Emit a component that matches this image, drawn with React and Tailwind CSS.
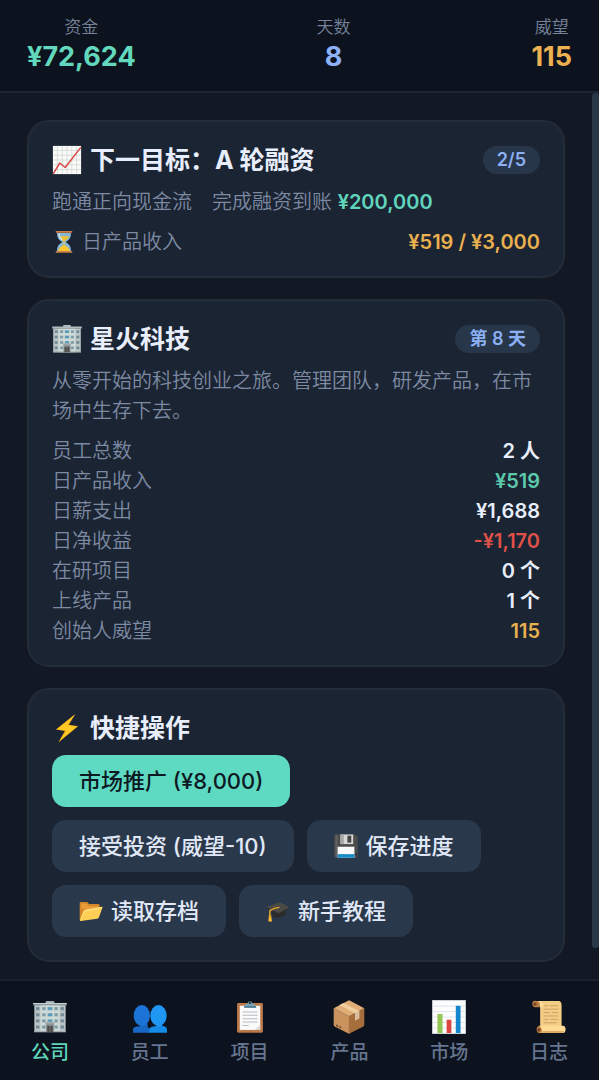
import React from "react";

const windowRows = [24, 42, 60, 78];
const windowCols = [14, 32, 50, 68, 86];

function Building({ className }) {
  return (
    <svg className={className} viewBox="0 0 100 100" aria-hidden="true">
      <path d="M37 4h26v10H37z" fill="#9aa7ab" />
      <path d="M39 4h22v3H39z" fill="#c7d1d3" />
      <path d="M4 14h92v80H4z" fill="#b9c5c6" />
      <path d="M1 9h98v7H1z" fill="#8c9a9e" />
      <path d="M1 9h98v3H1z" fill="#cbd4d5" />
      <path d="M22 16h56v78H22z" fill="#cfd9d6" />
      {windowRows.map((y) =>
        windowCols.map((x) => (
          <rect
            key={`${x}-${y}`}
            x={x === 50 ? 43 : x - 5}
            y={y - 3}
            width={x === 50 ? 14 : 10}
            height="9"
            fill={x === 50 ? "#5a9bbd" : x === 14 || x === 86 ? "#748b95" : "#7d9ea8"}
          />
        ))
      )}
      <path d="M3 91h94v4H3z" fill="#a3afb1" />
      <path d="M38 66h24v28H38z" fill="#8d9596" />
      <path d="M36 64h28v5H36z" fill="#a9b1b2" />
      <path d="M42 76h7v18h-7zM51 76h7v18h-7z" fill="#4d4745" />
    </svg>
  );
}

function ChartUp({ className }) {
  return (
    <svg className={className} viewBox="0 0 100 100" aria-hidden="true">
      <path d="M3 3h94v94H3z" fill="#fbfbf8" />
      <path
        d="M3 18h94M3 34h94M3 50h94M3 66h94M3 82h94M18 3v94M34 3v94M50 3v94M66 3v94M82 3v94"
        stroke="#ccd6d1"
        strokeWidth="2.5"
      />
      <path d="M4 96 26 60l18 15L96 8" fill="none" stroke="#d9474a" strokeWidth="5" strokeLinejoin="round" />
    </svg>
  );
}

function Hourglass({ className }) {
  return (
    <svg className={className} viewBox="0 0 100 100" aria-hidden="true">
      <path d="M21 12h58c0 22-8 29-22 38 14 9 22 17 22 38H21c0-21 8-29 22-38C29 41 21 34 21 12z" fill="#86b8d6" />
      <path d="M29 26h42c-3 10-11 15-21 22-10-7-18-12-21-22z" fill="#f3c02f" />
      <path d="M48 46h4v20h-4z" fill="#f7cf45" />
      <path d="M26 88c2-13 12-19 24-25 12 6 22 12 24 25z" fill="#fbc72b" />
      <path d="M29 15c1 14 6 21 14 27" fill="none" stroke="#cfe6f2" strokeWidth="5" />
      <path d="M16 4h68v8H16zM16 88h68v8H16z" fill="#a8653e" />
      <path d="M16 4h68v3H16zM16 88h68v3H16z" fill="#cd8c5c" />
    </svg>
  );
}

function Bolt({ className }) {
  return (
    <svg className={className} viewBox="0 0 100 100" aria-hidden="true">
      <path d="M78 3 13 55l30 5-22 38 66-54-31-5z" fill="#fdb61b" />
      <path d="M74 7 20 53l31 4-22 32 51-43-32-5z" fill="#feca28" />
    </svg>
  );
}

function Floppy({ className }) {
  return (
    <svg className={className} viewBox="0 0 100 100" aria-hidden="true">
      <path d="M8 1h79l12 12v78a8 8 0 0 1-8 8H8a7 7 0 0 1-7-7V8a7 7 0 0 1 7-7z" fill="#4c4c4c" />
      <path d="M6 3h8v94H6z" fill="#636363" />
      <path d="M27 2h53v40H27z" fill="#d7d7d7" />
      <path d="M27 2h14v40H27z" fill="#a9a9a9" />
      <path d="M56 7h16v29H56z" fill="#454545" />
      <path d="M15 53h70v46H15z" fill="#fafafa" />
      <path d="M15 84h70v15H15z" fill="#168bc6" />
      <path d="M89 82h6v7h-6z" fill="#222" />
    </svg>
  );
}

function Folder({ className }) {
  return (
    <svg className={className} viewBox="0 0 100 100" aria-hidden="true">
      <path d="M3 17q0-5 5-5h26l8 9h38q6 0 6 6v14L16 88 3 90z" fill="#d4872b" />
      <path d="M9 20h24l8 9h38v14H9z" fill="#e79c38" />
      <path d="M28 45 99 32 83 76q-2 5-7 6L7 92q-4 1-3-4l15-37q3-5 9-6z" fill="#ffcf55" />
      <path d="m25 52 69-13 2-7-68 13q-6 1-9 6L4 88z" fill="#ffe083" />
    </svg>
  );
}

function GradCap({ className }) {
  return (
    <svg className={className} viewBox="0 0 100 100" aria-hidden="true">
      <path d="M27 42v29c8 12 43 8 57-6V38z" fill="#2b2b2b" />
      <path d="M1 33 57 14l42 21-47 28z" fill="#4a4a46" />
      <path d="m1 33 51 25 47-23v5L52 64 1 38z" fill="#303030" />
      <path d="M54 35c-14 1-28 7-38 13v25" fill="none" stroke="#e8a722" strokeWidth="6" strokeLinecap="round" />
      <path d="m12 68 9-1 4 27H10z" fill="#f8b934" />
      <path d="M11 72h11" stroke="#c27d16" strokeWidth="3" />
    </svg>
  );
}

function People({ className }) {
  return (
    <svg className={className} viewBox="0 0 100 100" aria-hidden="true">
      <path d="M0 96V87c0-7 8-9 18-10 7-1 8-3 8-7h17v10l9 5v11z" fill="#1768c4" />
      <ellipse cx="26" cy="46" rx="24" ry="31" fill="#1b74d5" />
      <path d="M48 96V88c0-8 8-10 17-11 6-1 6-4 6-8h14c0 5 0 7 5 8 6 1 10 3 10 10v9z" fill="#168ce9" />
      <ellipse cx="75" cy="46" rx="24" ry="31" fill="#2098f3" />
    </svg>
  );
}

function Clipboard({ className }) {
  return (
    <svg className={className} viewBox="0 0 100 100" aria-hidden="true">
      <rect x="12" y="9" width="76" height="87" rx="4" fill="#bb7a4c" />
      <path d="M20 17h60v71H20z" fill="#fafafa" />
      <path d="M64 88 80 74v14z" fill="#d7d7d7" />
      <path d="M28 35h44M28 45h44M28 55h44M28 65h44M28 75h18" stroke="#b5bcc0" strokeWidth="3" />
      <path d="M33 22c0-8 5-10 10-11a7 7 0 0 1 14 0c5 1 11 3 11 11z" fill="#75a4b8" />
      <path d="M33 18h35v5H33z" fill="#4e7d91" />
      <circle cx="50" cy="8" r="4" fill="#263b47" />
    </svg>
  );
}

function Parcel({ className }) {
  return (
    <svg className={className} viewBox="0 0 100 100" aria-hidden="true">
      <path d="m5 24 45 24v51L9 79q-4-2-4-6z" fill="#ca935d" />
      <path d="M50 48 95 24v49q0 4-4 6L50 99z" fill="#a66e3c" />
      <path d="M5 24 47 2q3-2 6 0l42 22-45 24z" fill="#dfae76" />
      <path d="M22 15 34 9l46 23v22l-12 6V39z" fill="#efcf9f" />
      <path d="m68 39 12-7v22l-12 6z" fill="#d9bf9f" />
      <path d="m50 48v51" stroke="#b77e4a" strokeWidth="2" />
      <path d="m12 71 6 3v6l-6-3zM22 76l5 2v6l-5-2z" fill="#74502e" />
    </svg>
  );
}

function BarChart({ className }) {
  return (
    <svg className={className} viewBox="0 0 100 100" aria-hidden="true">
      <path d="M1 1h98v98H1z" fill="#fdfdfd" />
      <path d="M1 18h98M1 34h98M1 50h98M1 66h98M1 82h98" stroke="#ced9df" strokeWidth="2" />
      <path d="M1 1h98v98H1z" fill="none" stroke="#d5dfe4" strokeWidth="2" />
      <path d="M16 41h15v56H16z" fill="#93c653" />
      <path d="M43 58h14v39H43z" fill="#dd4541" />
      <path d="M70 17h14v80H70z" fill="#1685cf" />
    </svg>
  );
}

function Scroll({ className }) {
  return (
    <svg className={className} viewBox="0 0 100 100" aria-hidden="true">
      <path d="M8 3h70c8 0 9 7 9 14v62H24V20z" fill="#f4cd86" />
      <path d="M8 2C-2 3-1 20 8 21h15V10C22 4 16 2 8 2z" fill="#bb7d43" />
      <circle cx="9" cy="12" r="5" fill="#704523" />
      <path d="M17 3c8 2 8 9 7 18h7c1-11-1-17-14-18z" fill="#ffe0a3" />
      <path d="M21 76h71c9 1 9 20 0 21H21z" fill="#ffdb95" />
      <path d="M21 91h74q-1 5-5 6H21z" fill="#dfad65" />
      <path d="M21 76c-10 1-10 21 0 22 7-2 9-7 7-14z" fill="#bd7b42" />
      <circle cx="20" cy="88" r="5" fill="#704523" />
      <path d="M35 17h13M52 17h25M34 27h43M34 37h20M59 37h18M34 47h43M34 57h15M54 57h23M34 67h38" stroke="#bb8d53" strokeWidth="2" />
    </svg>
  );
}

const stats = [
  { label: "员工总数", value: "2 人", color: "text-[#e8eefc]" },
  { label: "日产品收入", value: "¥519", color: "text-[#5cc9ad]" },
  { label: "日薪支出", value: "¥1,688", color: "text-[#e8eefc]" },
  { label: "日净收益", value: "-¥1,170", color: "text-[#dd5148]" },
  { label: "在研项目", value: "0 个", color: "text-[#e8eefc]" },
  { label: "上线产品", value: "1 个", color: "text-[#e8eefc]" },
  { label: "创始人威望", value: "115", color: "text-[#e9b04f]" },
];

const tabs = [
  { label: "公司", Icon: Building, active: true },
  { label: "员工", Icon: People },
  { label: "项目", Icon: Clipboard },
  { label: "产品", Icon: Parcel },
  { label: "市场", Icon: BarChart },
  { label: "日志", Icon: Scroll },
];

function Resource({ label, value, color }) {
  return (
    <div className="flex flex-col items-center">
      <span className="text-[17px] leading-6 font-[350] text-[#76839b]">{label}</span>
      <span className={`text-[27px] leading-9 font-bold ${color}`}>{value}</span>
    </div>
  );
}

function Card({ title, Icon, badge, children }) {
  return (
    <section className="rounded-[22px] border-2 border-[#232c39] bg-[#1b2432] px-[23px] py-[19px]">
      <div className="mb-2 flex items-center justify-between">
        <h2 className="flex items-center gap-2 text-[25px] leading-[38px] font-bold text-[#e8eefc]">
          <Icon className="size-[30px]" />
          {title}
        </h2>
        {badge && (
          <span className="rounded-full bg-[#283649] px-[14px] text-[18px] leading-7 font-semibold text-[#8bb0f5]">
            {badge}
          </span>
        )}
      </div>
      {children}
    </section>
  );
}

function ActionButton({ Icon, primary, children }) {
  return (
    <button
      type="button"
      className={`flex h-[52px] items-center gap-2 rounded-[14px] px-[27px] text-[22px] font-medium ${
        primary ? "bg-[#5edac2] text-[#0d1a24]" : "bg-[#2a384b] text-[#e0e8f8]"
      }`}
    >
      {Icon && <Icon className="size-6" />}
      {children}
    </button>
  );
}

export default function App() {
  return (
    <div className="flex min-h-screen flex-col bg-[#131924] font-['Inter','Noto_Sans_CJK_SC',sans-serif]">
      <header className="flex justify-between border-b-2 border-[#1e2530] bg-[#0d131e] px-[27px] pt-[15px] pb-4">
        <Resource label="资金" value="¥72,624" color="text-[#62d8bd]" />
        <Resource label="天数" value="8" color="text-[#8fb2f6]" />
        <Resource label="威望" value="115" color="text-[#eeb152]" />
      </header>

      <div className="flex flex-1">
        <main className="flex min-w-0 flex-1 flex-col gap-[21px] px-[27px] pt-[27px] pb-4">
          <Card title="下一目标：A 轮融资" Icon={ChartUp} badge="2/5">
            <p className="text-[20px] leading-[30px] font-[350] text-[#7d8aa3]">
              跑通正向现金流　完成融资到账 <strong className="font-semibold text-[#60d5bc]">¥200,000</strong>
            </p>
            <div className="mt-[10px] flex items-center justify-between text-[20px] leading-[30px]">
              <span className="flex items-center gap-[6px] font-[350] text-[#7d8aa3]">
                <Hourglass className="size-6" />
                日产品收入
              </span>
              <span className="font-semibold text-[#e9b04f]">¥519 / ¥3,000</span>
            </div>
          </Card>

          <Card title="星火科技" Icon={Building} badge="第 8 天">
            <p className="text-[20px] leading-[30px] font-[350] text-[#7d8aa3]">
              从零开始的科技创业之旅。管理团队，研发产品，在市场中生存下去。
            </p>
            <dl className="mt-[10px] text-[20px] leading-[30px]">
              {stats.map((s) => (
                <div key={s.label} className="flex justify-between">
                  <dt className="font-[350] text-[#7d8aa3]">{s.label}</dt>
                  <dd className={`font-semibold ${s.color}`}>{s.value}</dd>
                </div>
              ))}
            </dl>
          </Card>

          <Card title="快捷操作" Icon={Bolt}>
            <div className="flex flex-wrap gap-[13px] pb-1">
              <ActionButton primary>市场推广 (¥8,000)</ActionButton>
              <ActionButton>接受投资 (威望-10)</ActionButton>
              <ActionButton Icon={Floppy}>保存进度</ActionButton>
              <ActionButton Icon={Folder}>读取存档</ActionButton>
              <ActionButton Icon={GradCap}>新手教程</ActionButton>
            </div>
          </Card>
        </main>
        <div className="mb-[31px] w-[7px] rounded-full bg-[#283849]" aria-hidden="true" />
      </div>

      <nav className="grid grid-cols-6 border-t-2 border-[#1b222d] bg-[#0d131e] pt-[19px] pb-[13px]">
        {tabs.map(({ label, Icon, active }) => (
          <a
            key={label}
            href="#"
            aria-current={active ? "page" : undefined}
            className={`flex flex-col items-center gap-[5px] text-[19px] leading-7 font-medium ${
              active ? "text-[#5fd6bb]" : "text-[#66758f]"
            }`}
          >
            <Icon className="size-[34px]" />
            {label}
          </a>
        ))}
      </nav>
    </div>
  );
}
